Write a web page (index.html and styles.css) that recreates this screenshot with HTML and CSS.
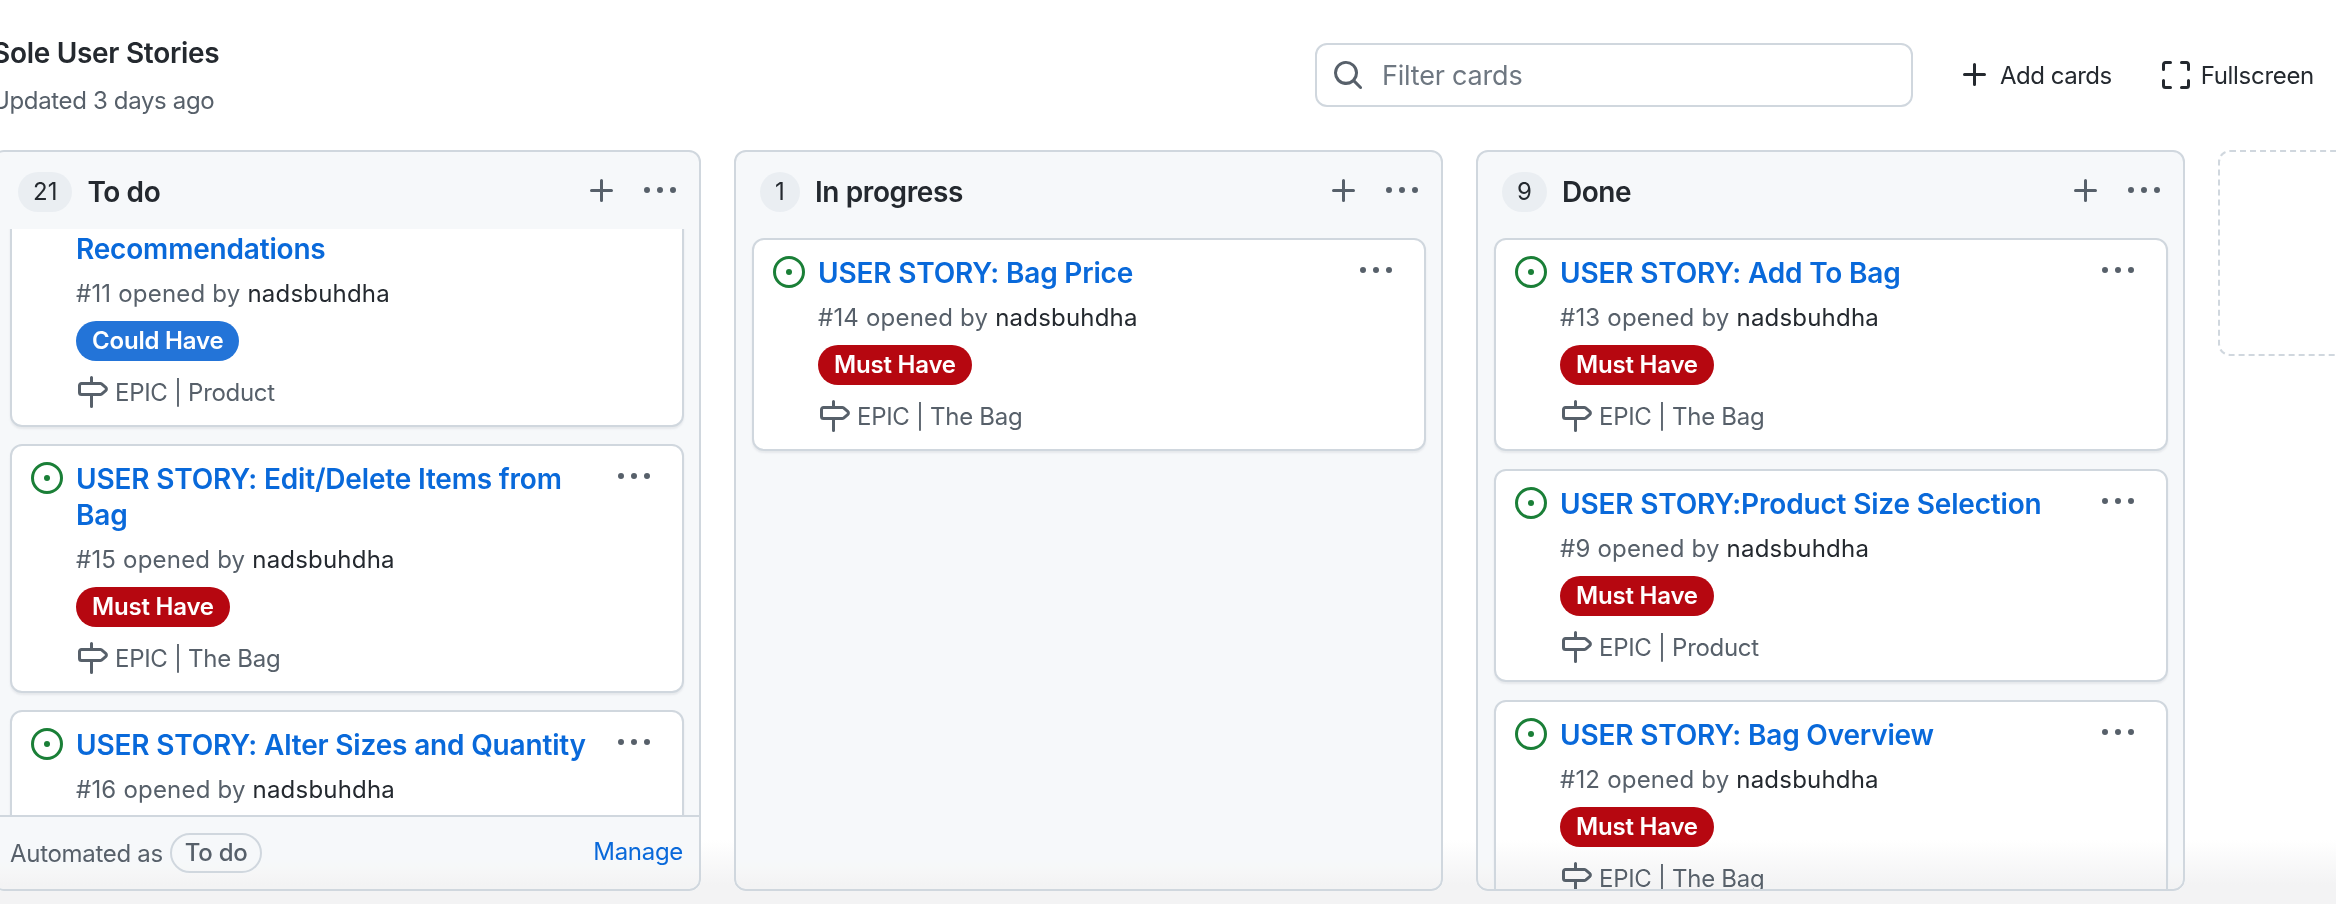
FILE: index.html
```html
<!DOCTYPE html>
<html lang="en">
<head>
  <meta charset="UTF-8" />
  <meta name="viewport" content="width=device-width, initial-scale=1.0" />
  <title>Sole User Stories</title>
  <link rel="stylesheet" href="styles.css">
</head>
<body>
  <svg class="sprite" aria-hidden="true">
    <symbol id="i-plus" viewBox="0 0 16 16"><path d="M7.75 2a.75.75 0 0 1 .75.75V7h4.25a.75.75 0 0 1 0 1.5H8.5v4.25a.75.75 0 0 1-1.5 0V8.5H2.75a.75.75 0 0 1 0-1.5H7V2.75A.75.75 0 0 1 7.75 2Z"/></symbol>
    <symbol id="i-kebab" viewBox="0 0 16 16"><path d="M8 9a1.5 1.5 0 1 0 0-3 1.5 1.5 0 0 0 0 3ZM1.5 9a1.5 1.5 0 1 0 0-3 1.5 1.5 0 0 0 0 3Zm13 0a1.5 1.5 0 1 0 0-3 1.5 1.5 0 0 0 0 3Z"/></symbol>
    <symbol id="i-issue" viewBox="0 0 16 16"><path d="M8 9.5a1.5 1.5 0 1 0 0-3 1.5 1.5 0 0 0 0 3Z"/><path d="M8 0a8 8 0 1 1 0 16A8 8 0 0 1 8 0ZM1.5 8a6.5 6.5 0 1 0 13 0 6.5 6.5 0 0 0-13 0Z"/></symbol>
    <symbol id="i-milestone" viewBox="0 0 16 16"><path d="M7.75 0a.75.75 0 0 1 .75.75V3h3.634c.414 0 .814.147 1.13.414l2.07 1.75a1.75 1.75 0 0 1 0 2.672l-2.07 1.75a1.75 1.75 0 0 1-1.13.414H8.5v5.25a.75.75 0 0 1-1.5 0V10H2.75A1.75 1.75 0 0 1 1 8.25v-3.5C1 3.784 1.784 3 2.75 3H7V.75A.75.75 0 0 1 7.75 0Zm4.384 8.5a.25.25 0 0 0 .161-.06l2.07-1.75a.25.25 0 0 0 0-.38l-2.07-1.75a.25.25 0 0 0-.161-.06H2.75a.25.25 0 0 0-.25.25v3.5c0 .138.112.25.25.25h9.384Z"/></symbol>
    <symbol id="i-search" viewBox="0 0 16 16"><path d="M10.68 11.74a6 6 0 0 1-7.922-8.982 6 6 0 0 1 8.982 7.922l3.04 3.04a.749.749 0 0 1-.326 1.275.749.749 0 0 1-.734-.215ZM11.5 7a4.499 4.499 0 1 0-8.997 0A4.499 4.499 0 0 0 11.5 7Z"/></symbol>
    <symbol id="i-full" viewBox="0 0 16 16"><path d="M1.75 10a.75.75 0 0 1 .75.75v2.5c0 .138.112.25.25.25h2.5a.75.75 0 0 1 0 1.5h-2.5A1.75 1.75 0 0 1 1 13.25v-2.5a.75.75 0 0 1 .75-.75Zm12.5 0a.75.75 0 0 1 .75.75v2.5A1.75 1.75 0 0 1 13.25 15h-2.5a.75.75 0 0 1 0-1.5h2.5a.25.25 0 0 0 .25-.25v-2.5a.75.75 0 0 1 .75-.75ZM2.75 2.5a.25.25 0 0 0-.25.25v2.5a.75.75 0 0 1-1.5 0v-2.5C1 1.784 1.784 1 2.75 1h2.5a.75.75 0 0 1 0 1.5ZM10 1.75a.75.75 0 0 1 .75-.75h2.5c.966 0 1.75.784 1.75 1.75v2.5a.75.75 0 0 1-1.5 0v-2.5a.25.25 0 0 0-.25-.25h-2.5a.75.75 0 0 1-.75-.75Z"/></symbol>
  </svg>

  <div class="page">
    <header class="top">
      <div class="project">
        <h1>Sole User Stories</h1>
        <p>Updated 3 days ago</p>
      </div>
      <label class="filter">
        <svg class="icon"><use href="#i-search"/></svg>
        <input type="text" placeholder="Filter cards" />
      </label>
      <a class="action action-add"><svg class="icon"><use href="#i-plus"/></svg>Add cards</a>
      <a class="action action-full"><svg class="icon"><use href="#i-full"/></svg>Fullscreen</a>
    </header>

    <main class="board">
      <section class="column">
        <div class="col-head">
          <span class="count">21</span>
          <h2>To do</h2>
          <svg class="icon col-plus"><use href="#i-plus"/></svg>
          <svg class="icon"><use href="#i-kebab"/></svg>
        </div>
        <div class="cards cards-scrolled">
          <article class="card">
            <svg class="icon issue"><use href="#i-issue"/></svg>
            <div class="card-body">
              <a class="card-title">USER STORY: Product Recommendations</a>
              <p class="meta">#11 opened by <span>nadsbuhdha</span></p>
              <span class="label label-could">Could Have</span>
              <p class="epic"><svg class="icon"><use href="#i-milestone"/></svg>EPIC | Product</p>
            </div>
            <svg class="icon card-menu"><use href="#i-kebab"/></svg>
          </article>
          <article class="card">
            <svg class="icon issue"><use href="#i-issue"/></svg>
            <div class="card-body">
              <a class="card-title">USER STORY: Edit/Delete Items from Bag</a>
              <p class="meta">#15 opened by <span>nadsbuhdha</span></p>
              <span class="label label-must">Must Have</span>
              <p class="epic"><svg class="icon"><use href="#i-milestone"/></svg>EPIC | The Bag</p>
            </div>
            <svg class="icon card-menu"><use href="#i-kebab"/></svg>
          </article>
          <article class="card">
            <svg class="icon issue"><use href="#i-issue"/></svg>
            <div class="card-body">
              <a class="card-title">USER STORY: Alter Sizes and Quantity</a>
              <p class="meta">#16 opened by <span>nadsbuhdha</span></p>
              <span class="label label-must">Must Have</span>
              <p class="epic"><svg class="icon"><use href="#i-milestone"/></svg>EPIC | The Bag</p>
            </div>
            <svg class="icon card-menu"><use href="#i-kebab"/></svg>
          </article>
        </div>
        <div class="col-foot">
          <span class="auto">Automated as</span>
          <span class="auto-pill">To do</span>
          <a class="manage">Manage</a>
        </div>
      </section>

      <section class="column">
        <div class="col-head">
          <span class="count">1</span>
          <h2>In progress</h2>
          <svg class="icon col-plus"><use href="#i-plus"/></svg>
          <svg class="icon"><use href="#i-kebab"/></svg>
        </div>
        <div class="cards">
          <article class="card">
            <svg class="icon issue"><use href="#i-issue"/></svg>
            <div class="card-body">
              <a class="card-title">USER STORY: Bag Price</a>
              <p class="meta">#14 opened by <span>nadsbuhdha</span></p>
              <span class="label label-must">Must Have</span>
              <p class="epic"><svg class="icon"><use href="#i-milestone"/></svg>EPIC | The Bag</p>
            </div>
            <svg class="icon card-menu"><use href="#i-kebab"/></svg>
          </article>
        </div>
      </section>

      <section class="column">
        <div class="col-head">
          <span class="count">9</span>
          <h2>Done</h2>
          <svg class="icon col-plus"><use href="#i-plus"/></svg>
          <svg class="icon"><use href="#i-kebab"/></svg>
        </div>
        <div class="cards">
          <article class="card">
            <svg class="icon issue"><use href="#i-issue"/></svg>
            <div class="card-body">
              <a class="card-title">USER STORY: Add To Bag</a>
              <p class="meta">#13 opened by <span>nadsbuhdha</span></p>
              <span class="label label-must">Must Have</span>
              <p class="epic"><svg class="icon"><use href="#i-milestone"/></svg>EPIC | The Bag</p>
            </div>
            <svg class="icon card-menu"><use href="#i-kebab"/></svg>
          </article>
          <article class="card">
            <svg class="icon issue"><use href="#i-issue"/></svg>
            <div class="card-body">
              <a class="card-title">USER STORY:Product Size Selection</a>
              <p class="meta">#9 opened by <span>nadsbuhdha</span></p>
              <span class="label label-must">Must Have</span>
              <p class="epic"><svg class="icon"><use href="#i-milestone"/></svg>EPIC | Product</p>
            </div>
            <svg class="icon card-menu"><use href="#i-kebab"/></svg>
          </article>
          <article class="card">
            <svg class="icon issue"><use href="#i-issue"/></svg>
            <div class="card-body">
              <a class="card-title">USER STORY: Bag Overview</a>
              <p class="meta">#12 opened by <span>nadsbuhdha</span></p>
              <span class="label label-must">Must Have</span>
              <p class="epic"><svg class="icon"><use href="#i-milestone"/></svg>EPIC | The Bag</p>
            </div>
            <svg class="icon card-menu"><use href="#i-kebab"/></svg>
          </article>
        </div>
      </section>

      <section class="column column-add"></section>
    </main>

    <div class="bottom-fade"></div>
  </div>
</body>
</html>
```

FILE: styles.css
```css
* {
  box-sizing: border-box;
}
body {
  margin: 0;
  background: #fff;
  color: #24292f;
  font-family: Inter, 'Noto Sans', sans-serif;
  font-size: 24px;
}
h1, h2, p {
  margin: 0;
}
.sprite {
  display: none;
}
.icon {
  width: 32px;
  height: 32px;
  flex: none;
  fill: #57606a;
}
.page {
  position: relative;
  width: 2336px;
  height: 904px;
  overflow: hidden;
}

/* top bar */
.top {
  display: flex;
  align-items: flex-start;
  height: 150px;
  padding-right: 22px;
}
.project {
  margin-left: -8px;
  margin-top: 35px;
}
.project h1 {
  font-size: 28px;
  font-weight: 600;
  line-height: 36px;
  letter-spacing: -0.3px;
}
.project p {
  margin-top: 12px;
  line-height: 36px;
  color: #57606a;
  letter-spacing: -0.35px;
}
.filter {
  display: flex;
  align-items: center;
  gap: 18px;
  width: 598px;
  height: 64px;
  margin-left: auto;
  margin-top: 43px;
  padding-left: 15px;
  background: #fff;
  border: 2px solid #d0d7de;
  border-radius: 12px;
}
.filter input {
  flex: 1;
  border: 0;
  outline: 0;
  padding: 0;
  font: 27px Inter, sans-serif;
  letter-spacing: -0.2px;
}
.filter input::placeholder {
  color: #6e7781;
  opacity: 1;
}
.action {
  display: flex;
  align-items: center;
  gap: 9px;
  height: 64px;
  margin-top: 43px;
  letter-spacing: -0.3px;
}
.action .icon {
  fill: #24292f;
}
.action-add {
  margin-left: 46px;
  letter-spacing: -0.5px;
}
.action-full {
  margin-left: 48px;
}

/* board */
.board {
  display: flex;
  gap: 33px;
  height: 741px;
  margin-left: -8px;
}
.column {
  display: flex;
  flex-direction: column;
  flex: none;
  width: 709px;
  background: #f6f8fa;
  border: 2px solid #d0d7de;
  border-radius: 12px;
  overflow: hidden;
}
.column-add {
  height: 206px;
  background: #fff;
  border-style: dashed;
}
.col-head {
  display: flex;
  align-items: center;
  height: 77px;
  flex: none;
  padding: 3px 23px 0 24px;
}
.col-head .icon {
  margin-top: -2px;
}
.count {
  min-width: 40px;
  height: 40px;
  padding: 0 15px;
  border-radius: 20px;
  background: #eaeef2;
  font-size: 24px;
  line-height: 40px;
  text-align: center;
}
.col-head h2 {
  flex: 1;
  margin-left: 15px;
  font-size: 28px;
  font-weight: 600;
  letter-spacing: -0.4px;
}
.col-plus {
  margin-right: 26px;
}
.cards {
  flex: 1;
  min-height: 0;
  overflow: hidden;
  display: flex;
  flex-direction: column;
  gap: 18px;
  padding: 9px 15px 0 16px;
}
/* first card is scrolled partly under the column header */
.cards-scrolled {
  gap: 17px;
}
.cards-scrolled .card:first-child {
  margin-top: -60px;
}
.card {
  display: flex;
  flex: none;
  padding: 15px 32px 17px 19px;
  background: #fff;
  border: 2px solid #d0d7de;
  border-radius: 12px;
  box-shadow: 0 2px 2px rgba(140, 149, 159, 0.15);
}
.issue {
  margin-top: 1px;
  margin-right: 13px;
  fill: #1a7f37;
}
.card-body {
  flex: 1;
  min-width: 0;
  padding-right: 16px;
}
.card-title {
  display: block;
  font-size: 28px;
  font-weight: 600;
  line-height: 36px;
  letter-spacing: -0.18px;
  color: #0969da;
}
.meta {
  margin-top: 9px;
  line-height: 36px;
  letter-spacing: 0.2px;
  color: #57606a;
}
.meta span {
  color: #24292f;
}
.label {
  display: block;
  width: fit-content;
  height: 40px;
  margin-top: 9px;
  padding: 0 16px;
  border-radius: 20px;
  color: #fff;
  font-weight: 600;
  line-height: 40px;
  letter-spacing: -0.2px;
}
.label-must {
  background: #b60710;
}
.label-could {
  background: #2374d8;
}
.epic {
  display: flex;
  align-items: center;
  gap: 7px;
  margin-top: 15px;
  height: 32px;
  color: #57606a;
  letter-spacing: -0.3px;
}

/* column footer */
.col-foot {
  display: flex;
  align-items: center;
  flex: none;
  height: 74px;
  padding: 0 16px;
  border-top: 2px solid #d0d7de;
  letter-spacing: -0.3px;
}
.auto {
  color: #57606a;
}
.auto-pill {
  height: 40px;
  margin-left: 7px;
  padding: 0 13px;
  border: 2px solid #d0d7de;
  border-radius: 20px;
  color: #57606a;
  font-weight: 500;
  line-height: 36px;
}
.manage {
  margin-left: auto;
  margin-bottom: 4px;
  color: #0969da;
}

/* soft grey fade at the bottom of the window, only tints what is lighter than it */
.bottom-fade {
  position: absolute;
  left: 0;
  right: 0;
  bottom: 0;
  height: 64px;
  background: linear-gradient(#fff, #f3f3f4 70%);
  mix-blend-mode: darken;
  pointer-events: none;
}
```
